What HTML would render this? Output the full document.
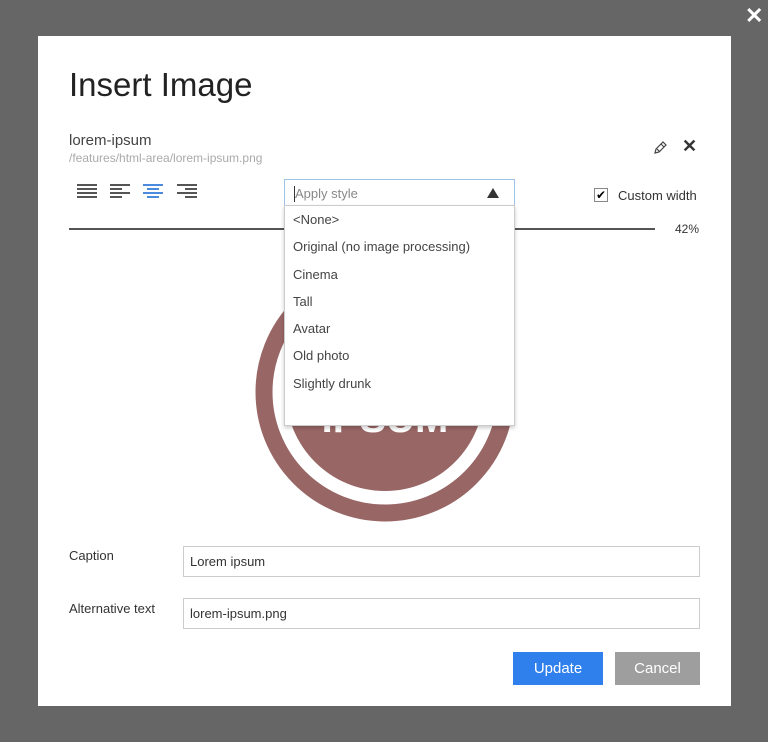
<!DOCTYPE html>
<html><head><style>
body{margin:0;width:768px;height:742px;background:#666;position:relative;font-family:"Liberation Sans",sans-serif;overflow:hidden}
.x{position:absolute;left:745px;top:3px;color:#fff;font-size:22px;font-weight:bold}
.dlg{position:absolute;left:38px;top:36px;width:693px;height:670px;background:#fff}
.a{position:absolute}
h1{position:absolute;left:31px;top:30px;margin:0;font-weight:normal;font-size:33px;color:#222}
.t{font-size:13px;color:#333}
.bar{width:20px;height:2px;background:#555;margin-bottom:2px}
.inp{position:absolute;border:1px solid #ccc;height:31px;left:145px;width:517px;font-size:13px;color:#333;line-height:30px;padding-left:6px;box-sizing:border-box}
.dd div{font-size:13px;color:#444;height:27.3px;line-height:27px;padding-left:8px}
</style></head><body>
<div class="x">✕</div>
<div class="dlg">
<h1>Insert Image</h1>
<div class="a" style="left:31px;top:96px;font-size:15px;color:#444">lorem-ipsum</div>
<div class="a" style="left:31px;top:115px;font-size:12px;color:#aaa">/features/html-area/lorem-ipsum.png</div>
<svg class="a" style="left:614px;top:104px" width="16" height="16" viewBox="0 0 16 16"><path d="M3 13l1-4 7-7 3 3-7 7z M5 9l3 3 M9 4l3 3" fill="none" stroke="#444" stroke-width="1.2"/></svg>
<div class="a" style="left:644px;top:100px;font-size:18px;color:#333;font-weight:bold">✕</div>
<div class="a" style="left:39px;top:148px"><div class="bar"></div><div class="bar"></div><div class="bar"></div><div class="bar"></div></div>
<div class="a" style="left:72px;top:148px"><div class="bar"></div><div class="bar" style="width:12px"></div><div class="bar"></div><div class="bar" style="width:12px"></div></div>
<div class="a" style="left:105px;top:148px"><div class="bar" style="background:#4a8be0"></div><div class="bar" style="width:12px;margin-left:4px;background:#4a8be0"></div><div class="bar" style="background:#4a8be0"></div><div class="bar" style="width:12px;margin-left:4px;background:#4a8be0"></div></div>
<div class="a" style="left:139px;top:148px"><div class="bar"></div><div class="bar" style="width:12px;margin-left:8px"></div><div class="bar"></div><div class="bar" style="width:12px;margin-left:8px"></div></div>
<div class="a" style="left:31px;top:192px;width:586px;height:2px;background:#555"></div>
<div class="a t" style="left:637px;top:186px;font-size:12px">42%</div>
<div class="a" style="left:556px;top:152px;width:12px;height:12px;border:1px solid #888;font-size:12px;line-height:12px;text-align:center">✔</div>
<div class="a t" style="left:580px;top:152px">Custom width</div>
<svg class="a" style="left:217px;top:226px" width="262" height="262"><circle cx="130" cy="130" r="121" fill="none" stroke="#986665" stroke-width="17"/><circle cx="130" cy="130" r="99" fill="#986665"/><text x="130" y="170" text-anchor="middle" font-size="40" font-weight="bold" fill="#fff" font-family="Liberation Sans">IPSUM</text></svg>
<div class="a" style="left:246px;top:143px;width:231px;height:28px;border:1px solid #9cc3ea;box-sizing:border-box;background:#fff">
<div class="a" style="left:9px;top:6px;width:1px;height:16px;background:#333"></div>
<div class="a" style="left:10px;top:6px;font-size:13px;color:#888">Apply style</div>
<div class="a" style="left:202px;top:8px;width:0;height:0;border-left:6px solid transparent;border-right:6px solid transparent;border-bottom:10px solid #333"></div>
</div>
<div class="a dd" style="left:246px;top:169px;width:231px;height:221px;background:#fff;border:1px solid #ccc;box-sizing:border-box;box-shadow:0 2px 4px rgba(0,0,0,.2)">
<div>&lt;None&gt;</div><div>Original (no image processing)</div><div>Cinema</div><div>Tall</div><div>Avatar</div><div>Old photo</div><div>Slightly drunk</div></div>
<div class="a t" style="left:31px;top:512px">Caption</div>
<div class="inp" style="top:510px">Lorem ipsum</div>
<div class="a t" style="left:31px;top:565px">Alternative text</div>
<div class="inp" style="top:562px">lorem-ipsum.png</div>
<div class="a" style="left:475px;top:616px;width:90px;height:33px;background:#2f80ed;color:#fff;font-size:15px;line-height:33px;text-align:center">Update</div>
<div class="a" style="left:577px;top:616px;width:85px;height:33px;background:#9e9e9e;color:#fff;font-size:15px;line-height:33px;text-align:center">Cancel</div>
</div>
</body></html>
